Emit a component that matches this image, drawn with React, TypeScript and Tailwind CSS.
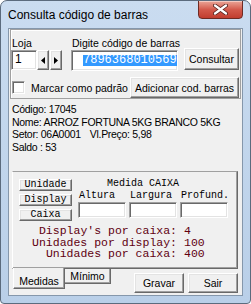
const raised =
  "bg-[#f0f0f0] border border-t-white border-l-white border-r-[#696969] border-b-[#696969] shadow-[inset_-1px_-1px_0_#a0a0a0,inset_1px_1px_0_#e3e3e3]";
const sunken =
  "bg-white border border-t-[#a0a0a0] border-l-[#a0a0a0] border-r-white border-b-white shadow-[inset_1px_1px_0_#696969,inset_-1px_-1px_0_#e3e3e3]";

const Arrow = ({ left }: { left?: boolean }) => (
  <svg width="4" height="7" viewBox="0 0 4 7">
    <polygon points={left ? "4,0 0,3.5 4,7" : "0,0 4,3.5 0,7"} fill="#000" />
  </svg>
);

const App = () => {
  const totals = [
    ["Display's por caixa:", "4"],
    ["Unidades por display:", "100"],
    ["Unidades por caixa:", "400"],
  ];

  return (
    <div className="w-[251px] h-[304px] flex flex-col overflow-hidden rounded-t-[7px] rounded-b-[4px] border border-[#5b6b7d] bg-gradient-to-b from-[#cadcf0] to-[#b9cfe8] font-['Liberation_Sans',Arial,sans-serif] text-black">
      {/* title bar */}
      <div className="h-[27px] shrink-0 flex items-start">
        <span className="mt-[7px] ml-[7px] text-[12px] leading-[14px]">Consulta código de barras</span>
        <div className="ml-auto mr-[7px] -mt-px w-[45px] h-[19px] flex items-center justify-center rounded-b-[4px] border border-[#6e2b24] bg-gradient-to-b from-[#e9a598] via-[#d35a4c] to-[#c13d2f] shadow-[inset_0_1px_0_#f4c9c0]">
          <svg width="15" height="11" viewBox="0 0 15 11">
            <path d="M2 1.5 L13 9.5 M13 1.5 L2 9.5" stroke="#5a2622" strokeWidth="4" strokeLinecap="round" />
            <path d="M2 1.5 L13 9.5 M13 1.5 L2 9.5" stroke="#fff" strokeWidth="2.2" strokeLinecap="round" />
          </svg>
        </div>
      </div>

      {/* client area */}
      <div className="mx-[7px] h-[268px] shrink-0 flex flex-col border border-[#8597ab] bg-[#f0f0f0] text-[10.5px] leading-[12px]">
        <div className="ml-px w-[231px] h-[70px] flex flex-col border border-[#a0a0a0] shadow-[inset_1px_1px_0_white]">
          <div className="flex items-start pt-[7px]">
            <div className="flex flex-col w-[51px]">
              <span className="pl-px h-[12px]">Loja</span>
              <div className="flex mt-px">
                <div className={sunken + " w-[26px] h-[20px] pl-[3px] text-[12px] leading-[17px]"}>1</div>
                <div className="flex gap-px">
                  <div className={raised + " w-[12px] h-[20px] flex items-center justify-center"}>
                    <Arrow left />
                  </div>
                  <div className={raised + " w-[12px] h-[20px] flex items-center justify-center"}>
                    <Arrow />
                  </div>
                </div>
              </div>
            </div>
            <div className="ml-[9px] w-[107px] flex flex-col">
              <span className="pl-px h-[12px] whitespace-nowrap">Digite código de barras</span>
              <div className={sunken + " mt-px w-[107px] h-[21px] flex items-center overflow-hidden"}>
                <span className="ml-[11px] shrink-0 whitespace-nowrap bg-[#3399ff] text-white font-['Liberation_Mono',monospace] text-[12px] leading-[11px]">
                  7896368010569
                </span>
              </div>
            </div>
            <button className={raised + " ml-[6px] mt-[11px] w-[55px] h-[22px] text-[10.5px]"}>Consultar</button>
          </div>
          <div className="flex items-center mt-[6px] h-[21px]">
            <div className={sunken + " ml-px w-[13px] h-[13px]"} />
            <span className="ml-[6px]">Marcar como padrão</span>
            <button className={raised + " ml-auto mr-px w-[109px] h-[21px] text-[10.5px]"}>Adicionar cod. barras</button>
          </div>
        </div>

        <div className="ml-[3px] mt-[4px] leading-[12.5px] tracking-[-0.3px]">
          <p>Código: 17045</p>
          <p>Nome: ARROZ FORTUNA 5KG BRANCO 5KG</p>
          <p>
            Setor: 06A0001<span className="ml-[9px]">Vl.Preço: 5,98</span>
          </p>
          <p>Saldo : 53</p>
        </div>

        {/* page control, tabs at the bottom */}
        <div className="ml-[3px] mt-[18px] w-[226px] h-[98px] flex flex-col border border-t-[#a0a0a0] border-l-white border-r-[#696969] border-b-[#696969] shadow-[inset_-1px_-1px_0_#a0a0a0]">
          <div className="flex items-start pt-[6px] pl-[6px] font-['Liberation_Mono',monospace] text-[10px]">
            <div className="mt-px flex flex-col gap-[3px]">
              {["Unidade", "Display", "Caixa"].map((b) => (
                <div key={b} className={raised + " w-[53px] h-[12px] flex items-center justify-center leading-[10px]"}>
                  {b}
                </div>
              ))}
            </div>
            <div className="ml-[6px] flex flex-col">
              <span className="pl-[29px] h-[12px] leading-[12px]">Medida CAIXA</span>
              <div className="flex gap-[3px] h-[12px] leading-[12px]">
                <span className="w-[48px] pl-px">Altura</span>
                <span className="w-[48px] pl-px">Largura</span>
                <span className="w-[48px] pl-px">Profund.</span>
              </div>
              <div className="flex gap-[3px]">
                <div className={sunken + " w-[48px] h-[16px]"} />
                <div className={sunken + " w-[48px] h-[16px]"} />
                <div className={sunken + " w-[48px] h-[16px]"} />
              </div>
            </div>
          </div>
          <div className="mt-[4px] font-['Liberation_Mono',monospace] text-[11.5px] leading-[11.7px] text-[#600010]">
            {totals.map(([label, value]) => (
              <div key={label} className="flex h-[11.7px] whitespace-pre">
                <span className="w-[164px] text-right">{label}</span>
                <span className="pl-[7px]">{value}</span>
              </div>
            ))}
          </div>
        </div>

        <div className="ml-[3px] flex items-start">
          <div className="relative ml-px -mt-px w-[52px] h-[21px] pt-[7px] text-center bg-[#f0f0f0] border border-t-0 border-l-white border-r-[#696969] border-b-[#696969] shadow-[inset_-1px_-1px_0_#a0a0a0]">
            Medidas
          </div>
          <div className="w-[46px] h-[15px] pt-px text-center bg-[#f0f0f0] border border-t-0 border-l-0 border-r-[#696969] border-b-[#696969] shadow-[inset_-1px_-1px_0_#a0a0a0]">
            Mínimo
          </div>
          <button className={raised + " ml-[23px] mt-[4px] w-[50px] h-[20px] text-[10.5px]"}>Gravar</button>
          <button className={raised + " ml-[4px] mt-[4px] w-[50px] h-[20px] text-[10.5px]"}>Sair</button>
        </div>
      </div>
    </div>
  );
};

export default App;
